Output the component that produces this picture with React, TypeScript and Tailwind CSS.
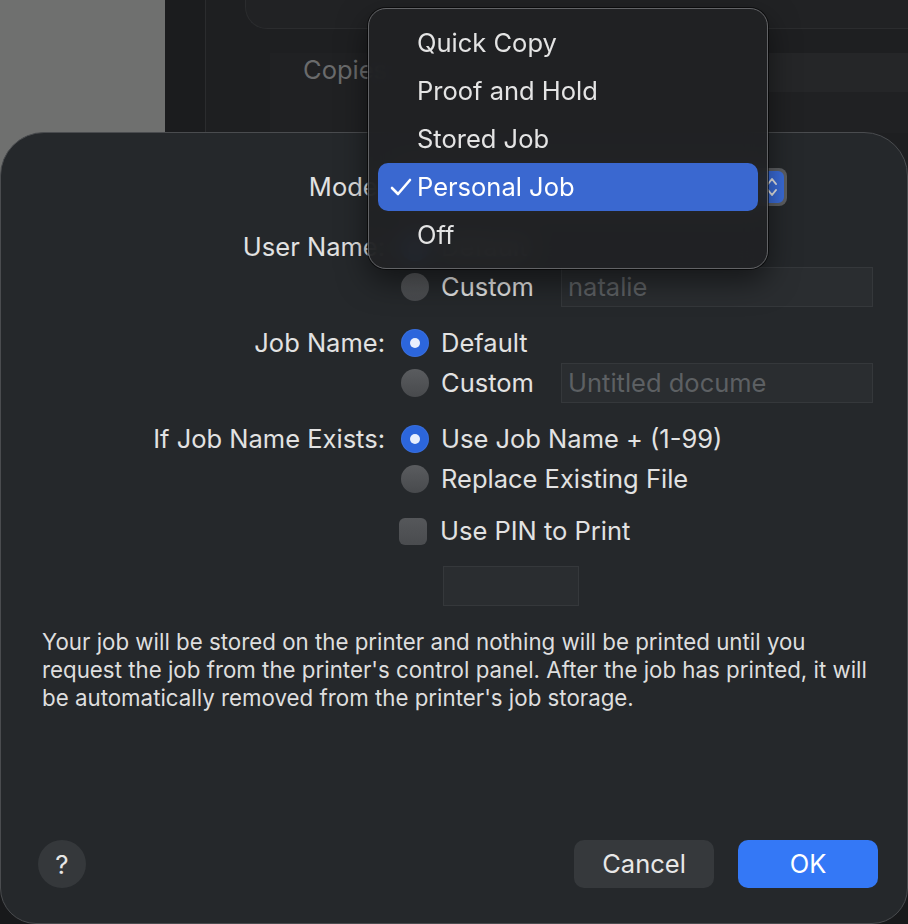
import React from 'react';

// Radio button in the macOS dark style
const Radio: React.FC<{ checked?: boolean }> = ({ checked }) =>
  checked ? (
    <span className="flex h-[28px] w-[28px] shrink-0 items-center justify-center rounded-full bg-[#2c66dc] shadow-[inset_0_0_0_1px_rgba(255,255,255,0.06)]">
      <span className="h-[10px] w-[10px] rounded-full bg-[#e8effd]" />
    </span>
  ) : (
    <span className="h-[28px] w-[28px] shrink-0 rounded-full bg-linear-to-b from-[#5a5c5f] to-[#484a4d]" />
  );

const TextField: React.FC<{ placeholder?: string; className?: string }> = ({ placeholder, className }) => (
  <div
    className={`flex h-[40px] items-center border border-[#35383b] bg-[#2a2d30] px-[6px] text-[#5d6063] ${className ?? ''}`}
  >
    {placeholder}
  </div>
);

const RadioRow: React.FC<{ checked?: boolean; label: string; field?: string }> = ({ checked, label, field }) => (
  <div className="flex h-[40px] items-center">
    <Radio checked={checked} />
    <span className={`ml-3 whitespace-nowrap ${field ? 'w-[120px]' : ''}`}>{label}</span>
    {field && <TextField placeholder={field} className="w-[312px]" />}
  </div>
);

// label column on the left, controls on the right
const Row: React.FC<{ label?: string; className?: string; children: React.ReactNode }> = ({
  label,
  className,
  children,
}) => (
  <div className={`flex ${className ?? ''}`}>
    <div className="flex h-[40px] w-[384px] shrink-0 items-center justify-end whitespace-nowrap">{label}</div>
    <div className="ml-4 flex flex-col">{children}</div>
  </div>
);

const menuItems = ['Quick Copy', 'Proof and Hold', 'Stored Job', 'Personal Job', 'Off'];
const selected = 'Personal Job';

const App: React.FC = () => {
  return (
    <div className="relative h-[924px] w-[908px] overflow-hidden bg-[#18191b] font-[Inter,sans-serif] text-[25.5px] text-[#e2e2e2]">
      {/* print dialog window behind the sheet */}
      <div className="absolute inset-0 flex">
        <div className="h-[600px] w-[165px] bg-[#6f706f]" />
        <div className="h-[600px] w-[41px] border-r border-[#2b2c2e] bg-[#1b1c1e]" />
        <div className="h-[600px] flex-1 bg-[#1e1f21]">
          <div className="ml-[39px] h-[29px] rounded-bl-[22px] border-b border-l border-[#2b2c2e] bg-[#212224]" />
          <div className="ml-[64px] mt-[24px] flex h-[80px] bg-[#202123]">
            <span className="ml-[33px] leading-[34px] text-[#6a6b6c]">Copies:</span>
            <div className="ml-[20px] h-[39px] flex-1 bg-[#252628]" />
          </div>
        </div>
      </div>

      {/* sheet */}
      <div className="relative mt-[132px] flex h-[792px] w-[908px] flex-col rounded-t-[44px] rounded-b-[36px] border border-[#4a4c4f] bg-[#25282b] pt-[35px] pb-[35px]">
        <Row label="Mode:" className="h-[38px] items-center [&>div:first-child]:h-[38px]">
          <div className="flex h-[38px] w-[386px] justify-end rounded-[8px] bg-[#5d5f62] p-[3px]">
            <div className="flex w-[24px] items-center justify-center rounded-[6px] bg-[#3a6cd9]">
              <svg width="12" height="22" viewBox="0 0 12 22" fill="none" stroke="#e8e8e8" strokeWidth="2" strokeLinecap="round" strokeLinejoin="round">
                <path d="M2 8 L6 3 L10 8" />
                <path d="M2 14 L6 19 L10 14" />
              </svg>
            </div>
          </div>
        </Row>

        <Row label="User Name:" className="mt-[21px]">
          <RadioRow checked label="Default" />
          <RadioRow label="Custom" field="natalie" />
        </Row>

        <Row label="Job Name:" className="mt-[16px]">
          <RadioRow checked label="Default" />
          <RadioRow label="Custom" field="Untitled docume" />
        </Row>

        <Row label="If Job Name Exists:" className="mt-[16px]">
          <RadioRow checked label="Use Job Name + (1-99)" />
          <RadioRow label="Replace Existing File" />
        </Row>

        <Row className="mt-[12px]">
          <div className="flex h-[40px] items-center">
            <span className="-ml-[2px] h-[27px] w-[28px] rounded-[6px] bg-linear-to-b from-[#55575a] to-[#4a4c4f]" />
            <span className="ml-[13px]">Use PIN to Print</span>
          </div>
          <TextField className="ml-[42px] mt-[15px] w-[136px]" />
        </Row>

        <p className="mt-[22px] whitespace-nowrap pl-[41px] text-[22.3px] leading-[28px] text-[#dedede]">
          Your job will be stored on the printer and nothing will be printed until you
          <br />
          request the job from the printer's control panel. After the job has printed, it will
          <br />
          be automatically removed from the printer's job storage.
        </p>

        <div className="mt-auto flex items-center justify-between pl-[37px] pr-[29px]">
          <div className="flex h-[48px] w-[48px] items-center justify-center rounded-full bg-[#35383b] text-[26px] text-[#e6e6e6]">
            ?
          </div>
          <div className="flex gap-[24px]">
            <button className="h-[48px] w-[140px] rounded-[10px] bg-[#36393c] text-[25.5px] text-[#e8e8e8]">Cancel</button>
            <button className="h-[48px] w-[140px] rounded-[10px] bg-[#3478f6] text-[25.5px] text-white">OK</button>
          </div>
        </div>
      </div>

      {/* open Mode pop-up menu */}
      <div className="absolute left-[368px] top-[8px] flex w-[400px] flex-col rounded-[18px] border border-[#626366] bg-[#202124]/[0.93] px-[9px] pt-[10px] pb-[9px] shadow-[0_0_0_1px_rgba(0,0,0,0.6),0_12px_30px_rgba(0,0,0,0.5)] backdrop-blur-md">
        {menuItems.map((item) => {
          const active = item === selected;
          return (
            <div
              key={item}
              className={`flex h-[48px] items-center rounded-[10px] ${active ? 'bg-[#3a68d0] text-white' : 'text-[#e4e4e4]'}`}
            >
              <span className="flex w-[39px] justify-end pr-[4px]">
                {active && (
                  <svg width="24" height="20" viewBox="0 0 24 20" fill="none" stroke="white" strokeWidth="2.6" strokeLinecap="round" strokeLinejoin="round">
                    <path d="M3 11 L9 17 L21 3" />
                  </svg>
                )}
              </span>
              <span>{item}</span>
            </div>
          );
        })}
      </div>
    </div>
  );
};

export default App;
